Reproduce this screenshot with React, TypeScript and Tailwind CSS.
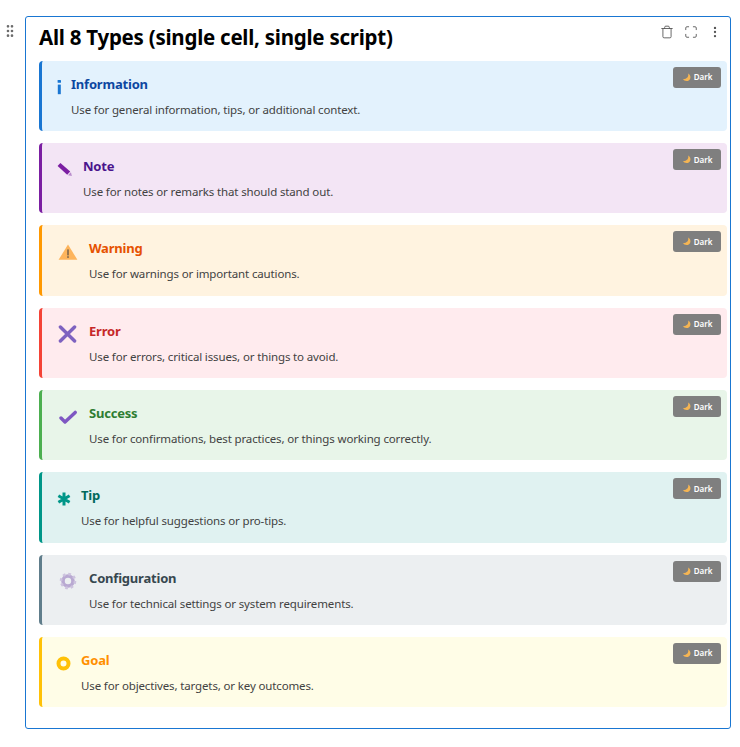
import { EllipsisVertical, GripVertical, Maximize, Trash } from "lucide-react";
import type { ReactNode } from "react";

const MOON = (
  <svg width="9" height="9" viewBox="0 0 10 10">
    <path d="M6.8.6c1 3.4-1.4 6.4-5.9 6.2 1.6 2.9 7.9 3.2 8.5-1.6C9.6 3.4 8.5 1.6 6.8.6z" fill="#f5b553" />
  </svg>
);

const ICONS: Record<string, ReactNode> = {
  info: (
    <svg width="7" height="16" viewBox="0 0 7 16">
      <rect x="1.6" y="1" width="3.4" height="2.8" rx="0.6" fill="#1976d2" />
      <rect x="1.8" y="5.6" width="3" height="9.6" fill="#1976d2" />
    </svg>
  ),
  note: (
    <svg width="18" height="16" viewBox="0 0 18 16">
      <path d="M1.6 4 4.4 1l9.8 8.6-3 3.2z" fill="#7b1fa2" />
      <path d="m12 13.2 2.9-3 1 3.8z" fill="#b98ccc" />
    </svg>
  ),
  warning: (
    <svg width="20" height="16" viewBox="0 0 20 16">
      <path d="M10 .6 19.4 15.8H.6z" fill="#fdb45c" />
      <rect x="9.3" y="5.4" width="1.4" height="6" fill="#6b5a48" />
      <rect x="9.3" y="12.2" width="1.4" height="1.7" fill="#6b5a48" />
    </svg>
  ),
  error: (
    <svg width="19" height="18" viewBox="0 0 19 18">
      <path d="M2.4 2 16.6 16M16.6 2 2.4 16" stroke="#7e62c0" strokeWidth="3.4" strokeLinecap="round" />
    </svg>
  ),
  success: (
    <svg width="18" height="14" viewBox="0 0 18 14">
      <path d="m2 8 4 4L16.2 2.4" fill="none" stroke="#7e57c2" strokeWidth="3.4" strokeLinecap="round" strokeLinejoin="round" />
    </svg>
  ),
  tip: (
    <svg width="14" height="14" viewBox="0 0 14 14">
      <path d="M7 .5v13M1.4 3.8l11.2 6.4M12.6 3.8 1.4 10.2" stroke="#009688" strokeWidth="3" />
    </svg>
  ),
  config: (
    <svg width="18" height="18" viewBox="0 0 18 18">
      <circle cx="9" cy="9" r="5" fill="none" stroke="#b9a9d2" strokeWidth="3.6" />
      <circle cx="9" cy="9" r="7" fill="none" stroke="#cdc3de" strokeWidth="2.6" strokeDasharray="2.7 2.8" />
    </svg>
  ),
  goal: (
    <svg width="15" height="15" viewBox="0 0 15 15">
      <circle cx="7.5" cy="7.5" r="5" fill="none" stroke="#ffc107" strokeWidth="4" />
    </svg>
  ),
};

const CALLOUTS = [
  { key: "info", title: "Information", text: "Use for general information, tips, or additional context.", box: "bg-[#e3f2fd] border-[#1976d2]", heading: "text-[#0d47a1]", iconBox: "w-[15px] pl-[0px]" },
  { key: "note", title: "Note", text: "Use for notes or remarks that should stand out.", box: "bg-[#f3e5f5] border-[#7b1fa2]", heading: "text-[#4a148c]", iconBox: "w-[27px] pl-[0px]" },
  { key: "warning", title: "Warning", text: "Use for warnings or important cautions.", box: "bg-[#fff3e0] border-[#ff9800]", heading: "text-[#e65100]", iconBox: "w-[33px] pl-[2px]" },
  { key: "error", title: "Error", text: "Use for errors, critical issues, or things to avoid.", box: "bg-[#ffebee] border-[#f44336]", heading: "text-[#c62828]", iconBox: "w-[33px] pl-[2px]" },
  { key: "success", title: "Success", text: "Use for confirmations, best practices, or things working correctly.", box: "bg-[#e8f5e9] border-[#4caf50]", heading: "text-[#2e7d32]", iconBox: "w-[33px] pl-[3px]" },
  { key: "tip", title: "Tip", text: "Use for helpful suggestions or pro-tips.", box: "bg-[#e0f2f1] border-[#009688]", heading: "text-[#00695c]", iconBox: "w-[25px] pl-[1px]" },
  { key: "config", title: "Configuration", text: "Use for technical settings or system requirements.", box: "bg-[#eceff1] border-[#607d8b]", heading: "text-[#37474f]", iconBox: "w-[33px] pl-[3px]" },
  { key: "goal", title: "Goal", text: "Use for objectives, targets, or key outcomes.", box: "bg-[#fffde7] border-[#ffc107]", heading: "text-[#ff8f00]", iconBox: "w-[25px] pl-[0px]" },
];

function Callout({ item }: { item: (typeof CALLOUTS)[number] }) {
  return (
    <div className={`relative flex h-[70.3px] rounded-[4px] border-l-[3px] pl-[14px] pt-[13px] ${item.box}`}>
      <div className={`flex h-[20px] shrink-0 items-center pt-[7px] ${item.iconBox}`}>{ICONS[item.key]}</div>
      <div>
        <div className={`text-[13px] font-bold leading-[20px] tracking-[-0.2px] ${item.heading}`}>{item.title}</div>
        <div className="mt-[8px] text-[11.5px] leading-[16px] tracking-[-0.14px] text-[#424242]">{item.text}</div>
      </div>
      <button className="absolute right-[6px] top-[6px] flex h-[21px] w-[48px] items-center justify-center gap-[3px] rounded-[3px] bg-[#7f7f7f] text-[8px] font-semibold text-white">
        {MOON}
        Dark
      </button>
    </div>
  );
}

export default function App() {
  return (
    <div className="flex h-[747px] w-[740px] bg-white pt-[16px] font-['Noto_Sans','Open_Sans',sans-serif]">
      <div className="flex w-[20px] shrink-0 justify-center pt-[7px] text-[#6b6b6b]">
        <GripVertical size={16} strokeWidth={2} />
      </div>
      <div className="relative ml-[5px] h-[713px] w-[706px] rounded-[3px] border border-[#1976d2] pl-[13px] pr-[3px]">
        <h2 className="h-[43.875px] pt-[4px] text-[20.5px] font-bold leading-[32px] tracking-[-0.25px] text-black">All 8 Types (single cell, single script)</h2>
        <div className="absolute right-[8px] top-[8px] flex items-center gap-[10px] text-[#555555]">
          <Trash size={14} strokeWidth={1.5} />
          <Maximize size={14} strokeWidth={1.5} />
          <EllipsisVertical size={14} strokeWidth={2} />
        </div>
        <div className="flex flex-col gap-[12px]">
          {CALLOUTS.map((item) => (
            <Callout key={item.key} item={item} />
          ))}
        </div>
      </div>
    </div>
  );
}
